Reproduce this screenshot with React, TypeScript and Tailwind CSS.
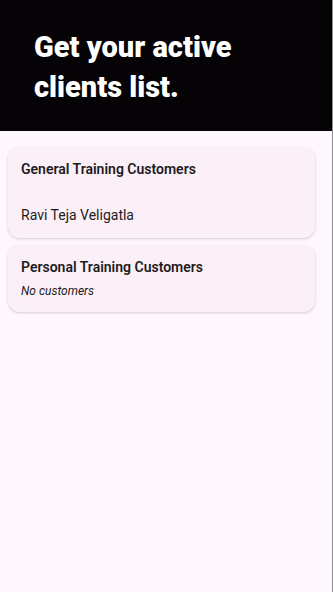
import React from "react";

const Section = ({ title, children, gap }: { title: string; children: React.ReactNode; gap: string }) => (
  <div className="rounded-[12px] bg-[#fcf0f8] shadow-[0_1px_3px_rgba(0,0,0,0.18)] px-[13px] pt-[12px] pb-[13px]">
    <h3 className="text-[14px] font-semibold leading-[20px] text-[#1d1b20]">{title}</h3>
    <div className={gap}>{children}</div>
  </div>
);

const App = () => {
  return (
    <div
      className="min-h-[592px] bg-[#fef7fe] border-r border-[#8c8c8c]"
      style={{ fontFamily: "Roboto, 'Noto Sans', sans-serif" }}
    >
      <header className="bg-[#050305] pt-[27px] pb-[24px] px-[34px]">
        <h1
          className="text-white text-[29px] leading-[40px] font-black tracking-normal"
          style={{ fontFamily: "Roboto, sans-serif" }}
        >
          Get your active
          <br />
          clients list.
        </h1>
      </header>

      <main className="pl-[8px] pr-[17px] pt-[16px] flex flex-col gap-[7px]">
        <Section title="General Training Customers" gap="mt-[26px]">
          <p className="text-[14px] leading-[20px] text-[#1d1b20]">Ravi Teja Veligatla</p>
        </Section>
        <Section title="Personal Training Customers" gap="mt-[6px]">
          <p className="text-[12px] leading-[16px] italic text-[#1d1b20]">No customers</p>
        </Section>
      </main>
    </div>
  );
};

export default App;
